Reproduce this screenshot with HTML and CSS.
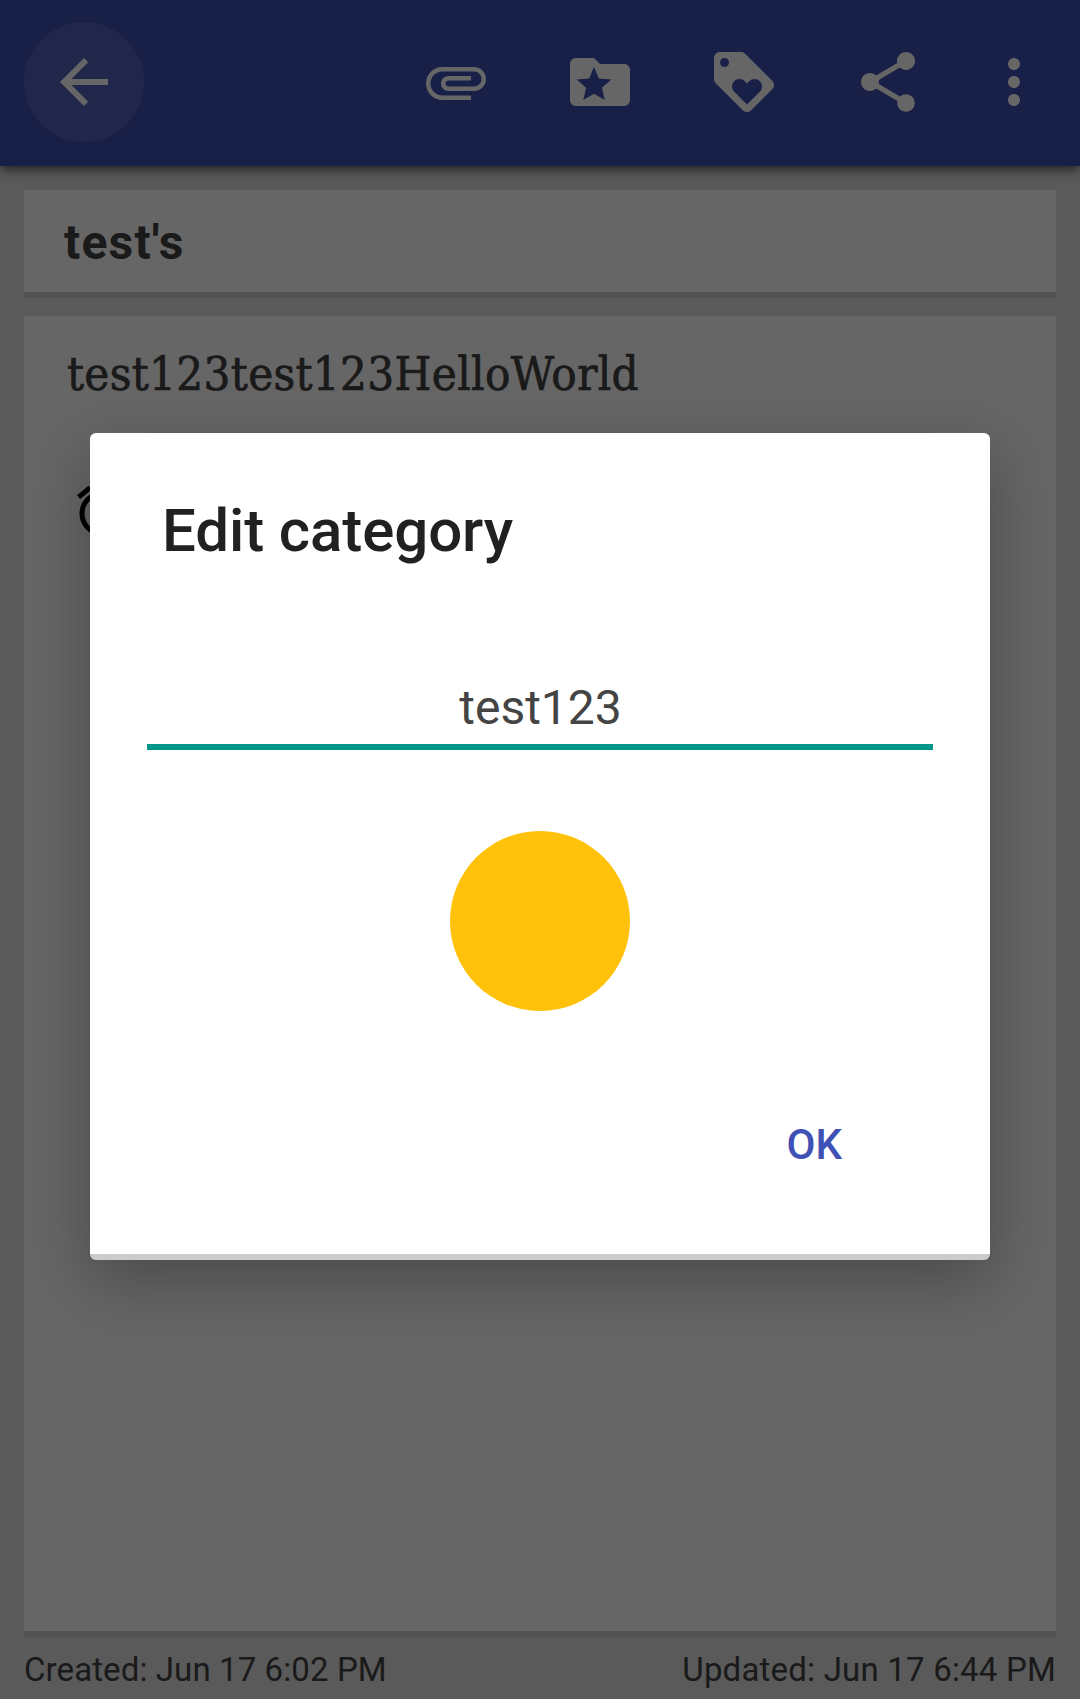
FILE: index.html
```html
<!DOCTYPE html>
<html lang="en">
<head>
<meta charset="utf-8">
<title>Edit category</title>
<link rel="stylesheet" href="styles.css">
</head>
<body>
<div class="screen">
  <header class="toolbar">
    <button class="back" aria-label="Back">
      <svg class="icon" viewBox="0 0 24 24"><path d="M20 11H7.83l5.59-5.59L12 4l-8 8 8 8 1.41-1.41L7.83 13H20v-2z"/></svg>
    </button>
    <nav class="actions">
      <svg class="icon" viewBox="0 0 24 24"><path d="M7.5 18C4.46 18 2 15.54 2 12.5S4.46 7 7.5 7H18c2.21 0 4 1.79 4 4s-1.79 4-4 4H9.5C8.12 15 7 13.88 7 12.5S8.12 10 9.5 10H17v1.5H9.5c-.55 0-1 .45-1 1s.45 1 1 1H18c1.38 0 2.5-1.12 2.5-2.5S19.38 8.5 18 8.5H7.5c-2.21 0-4 1.79-4 4s1.79 4 4 4H17V18H7.5z"/></svg>
      <svg class="icon" viewBox="0 0 24 24"><path d="M20 6h-8l-2-2H4c-1.1 0-1.99.9-1.99 2L2 18c0 1.1.9 2 2 2h16c1.1 0 2-.9 2-2V8c0-1.1-.9-2-2-2zm-6.42 12L10 15.9 6.42 18l.95-4.07-3.16-2.74 4.16-.36L10 7l1.63 3.84 4.16.36-3.16 2.74.95 4.06z"/></svg>
      <svg class="icon" viewBox="0 0 24 24"><path d="M21.41 11.58l-9-9C12.05 2.22 11.55 2 11 2H4c-1.1 0-2 .9-2 2v7c0 .55.22 1.05.59 1.42l9 9c.36.36.86.58 1.41.58.55 0 1.05-.22 1.41-.59l7-7c.37-.36.59-.86.59-1.41 0-.55-.23-1.06-.59-1.42zM5.5 7C4.67 7 4 6.33 4 5.5S4.67 4 5.5 4 7 4.67 7 5.5 6.33 7 5.5 7zm11.77 8.27L13 19.54l-4.27-4.27C8.28 14.81 8 14.19 8 13.5c0-1.38 1.12-2.5 2.5-2.5.69 0 1.32.28 1.77.74l.73.72.73-.73c.45-.45 1.08-.73 1.77-.73 1.38 0 2.5 1.12 2.5 2.5 0 .69-.28 1.32-.73 1.77z"/></svg>
      <svg class="icon" viewBox="0 0 24 24"><path d="M18 16.08c-.76 0-1.44.3-1.96.77L8.91 12.7c.05-.23.09-.46.09-.7s-.04-.47-.09-.7l7.05-4.11c.54.5 1.25.81 2.04.81 1.66 0 3-1.34 3-3s-1.34-3-3-3-3 1.34-3 3c0 .24.04.47.09.7L8.04 9.81C7.5 9.31 6.79 9 6 9c-1.66 0-3 1.34-3 3s1.34 3 3 3c.79 0 1.5-.31 2.04-.81l7.12 4.16c-.05.21-.08.43-.08.65 0 1.61 1.31 2.92 2.92 2.92 1.61 0 2.92-1.31 2.92-2.92s-1.31-2.92-2.92-2.92z"/></svg>
      <svg class="icon icon-more" viewBox="0 0 24 24"><path d="M12 8c1.1 0 2-.9 2-2s-.9-2-2-2-2 .9-2 2 .9 2 2 2zm0 2c-1.1 0-2 .9-2 2s.9 2 2 2 2-.9 2-2-.9-2-2-2zm0 6c-1.1 0-2 .9-2 2s.9 2 2 2 2-.9 2-2-.9-2-2-2z"/></svg>
    </nav>
  </header>
  <main class="note">
    <section class="card note-title">test's</section>
    <section class="card note-body">
      <p class="note-text">test123test123HelloWorld</p>
      <svg class="alarm" viewBox="0 0 24 24"><path d="M22 5.72l-4.6-3.86-1.29 1.53 4.6 3.86L22 5.72zM7.88 3.39L6.6 1.86 2 5.71l1.29 1.53 4.59-3.85zM12.5 8H11v6l4.75 2.85.75-1.23-4-2.37V8zM12 4c-4.97 0-9 4.03-9 9s4.02 9 9 9c4.97 0 9-4.03 9-9s-4.03-9-9-9zm0 16c-3.87 0-7-3.13-7-7s3.13-7 7-7 7 3.13 7 7-3.13 7-7 7z"/></svg>
    </section>
  </main>
  <footer class="dates">
    <span class="created">Created: Jun 17 6:02 PM</span>
    <span class="updated">Updated: Jun 17 6:44 PM</span>
  </footer>
</div>
<div class="scrim">
  <div class="dialog" role="dialog">
    <h1 class="dialog-title">Edit category</h1>
    <div class="field">test123</div>
    <div class="swatch"></div>
    <button class="ok">OK</button>
  </div>
</div>
</body>
</html>
```
FILE: styles.css
```css
* {
  box-sizing: border-box;
}

body {
  margin: 0;
  font-family: Roboto, sans-serif;
  color: #424242;
}

button {
  margin: 0;
  padding: 0;
  border: 0;
  background: none;
  font: inherit;
}

.screen {
  display: flex;
  flex-direction: column;
  height: 1699px;
  background: #e1e1e1;
}

.toolbar {
  display: flex;
  justify-content: space-between;
  height: 166px;
  padding: 22px 30px 24px 24px;
  background: #3f51b5;
  box-shadow: 0 3px 12px rgba(0, 0, 0, 0.7);
}

.back {
  display: flex;
  align-items: center;
  justify-content: center;
  width: 120px;
  height: 120px;
  border-radius: 50%;
  background: rgba(255, 255, 255, 0.1);
}

.actions {
  display: flex;
  align-items: center;
  gap: 72px;
}

.icon {
  display: block;
  width: 72px;
  height: 72px;
  fill: #fff;
}

.icon-more {
  margin-left: -18px;
}

.note {
  display: flex;
  flex: 1;
  flex-direction: column;
  gap: 18px;
  padding: 24px 24px 0;
}

.card {
  background: #fff;
  border-bottom: 6px solid #ccc;
}

.note-title {
  height: 108px;
  padding: 2px 40px 0;
  font-size: 48px;
  font-weight: 700;
  line-height: 102px;
  letter-spacing: 1.2px;
}

.note-body {
  flex: 1;
  padding: 28px 43px;
}

.note-text {
  margin: 0;
  font-family: "Roboto Slab", "DejaVu Serif Condensed", "DejaVu Serif", serif;
  font-size: 47px;
  line-height: 60px;
  letter-spacing: 0.35px;
  -webkit-text-stroke: 0.7px #424242;
}

.alarm {
  display: block;
  width: 60px;
  height: 60px;
  margin: 77px 0 0 5px;
  fill: #000;
}

.dates {
  display: flex;
  justify-content: space-between;
  height: 62px;
  padding: 0 24px;
  font-size: 33px;
  line-height: 65px;
}

.created {
  letter-spacing: 0.1px;
}

.updated {
  letter-spacing: 0.2px;
}

.scrim {
  position: absolute;
  inset: 0;
  height: 1699px;
  padding: 433px 90px 0;
  background: rgba(0, 0, 0, 0.6);
}

.dialog {
  display: flex;
  flex-direction: column;
  height: 827px;
  padding: 63px 57px 0;
  border-radius: 6px;
  background: linear-gradient(#ccc, #ccc) bottom / 100% 6px no-repeat #fff;
  box-shadow: 0 20px 64px rgba(0, 0, 0, 0.28);
}

.dialog-title {
  margin: 0 15px 113px;
  font-size: 60px;
  font-weight: 500;
  line-height: 70px;
  letter-spacing: -0.1px;
  color: #212121;
}

.field {
  height: 71px;
  border-bottom: 6px solid #009688;
  font-size: 48px;
  line-height: 57px;
  text-align: center;
  text-indent: 1px;
  color: #444;
}

.swatch {
  align-self: center;
  width: 180px;
  height: 180px;
  margin-top: 81px;
  border-radius: 50%;
  background: #ffc10a;
}

.ok {
  align-self: flex-end;
  margin: 109px 91px 0 0;
  font-size: 42px;
  font-weight: 500;
  line-height: 50px;
  color: #3f51b5;
}
```
